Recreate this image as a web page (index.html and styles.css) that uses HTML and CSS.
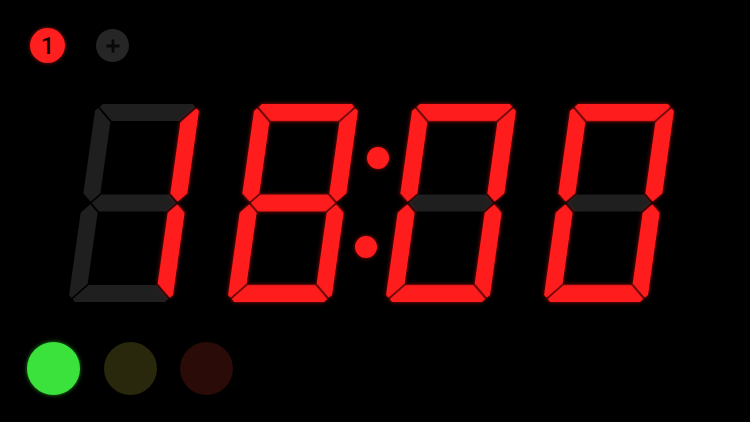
FILE: index.html
```html
<!DOCTYPE html>
<html>
<head>
<meta charset="utf-8">
<link rel="stylesheet" href="styles.css">
</head>
<body>
<div class="screen">
  <div class="topbar">
    <div class="badge">1</div>
    <div class="add">
      <svg width="16" height="16" viewBox="0 0 16 16"><path d="M8 1.5V14.5M1.5 8H14.5" class="plus"/></svg>
    </div>
  </div>
  <svg class="clock" viewBox="0 90 750 226" width="750" height="226">
    <defs>
      <polygon id="sa" points="-45,-99 45,-99 47.9,-96.1 33.8,-82 -33.8,-82 -47.9,-96.1"/>
      <polygon id="sb" points="35,-80.8 49.1,-94.9 52,-92 52,-9.7 43.5,-1.2 35,-9.7"/>
      <polygon id="sc" points="35,80.8 49.1,94.9 52,92 52,9.7 43.5,1.2 35,9.7"/>
      <polygon id="sd" points="-45,99 45,99 47.9,96.1 33.8,82 -33.8,82 -47.9,96.1"/>
      <polygon id="se" points="-35,80.8 -49.1,94.9 -52,92 -52,9.7 -43.5,1.2 -35,9.7"/>
      <polygon id="sf" points="-35,-80.8 -49.1,-94.9 -52,-92 -52,-9.7 -43.5,-1.2 -35,-9.7"/>
      <polygon id="sg" points="-42.3,0 -33.8,-8.5 33.8,-8.5 42.3,0 33.8,8.5 -33.8,8.5"/>
    </defs>
    <!-- digit 1 -->
    <g transform="translate(134 203) skewX(-8)">
      <use href="#sa" class="off"/><use href="#sd" class="off"/><use href="#se" class="off"/><use href="#sf" class="off"/><use href="#sg" class="off"/>
      <use href="#sb" class="on"/><use href="#sc" class="on"/>
    </g>
    <!-- digit 2 -->
    <g transform="translate(293 203) skewX(-8)">
      <use href="#sa" class="on"/><use href="#sb" class="on"/><use href="#sc" class="on"/><use href="#sd" class="on"/><use href="#se" class="on"/><use href="#sf" class="on"/><use href="#sg" class="on"/>
    </g>
    <!-- colon -->
    <circle cx="378" cy="158" r="11" class="on"/>
    <circle cx="366" cy="247" r="11" class="on"/>
    <!-- digit 3 -->
    <g transform="translate(451 203) skewX(-8)">
      <use href="#sg" class="off"/>
      <use href="#sa" class="on"/><use href="#sb" class="on"/><use href="#sc" class="on"/><use href="#sd" class="on"/><use href="#se" class="on"/><use href="#sf" class="on"/>
    </g>
    <!-- digit 4 -->
    <g transform="translate(609 203) skewX(-8)">
      <use href="#sg" class="off"/>
      <use href="#sa" class="on"/><use href="#sb" class="on"/><use href="#sc" class="on"/><use href="#sd" class="on"/><use href="#se" class="on"/><use href="#sf" class="on"/>
    </g>
  </svg>
  <div class="lights">
    <div class="light green"></div>
    <div class="light olive"></div>
    <div class="light maroon"></div>
  </div>
</div>
</body>
</html>
```
FILE: styles.css
```css
html, body {
  margin: 0;
  padding: 0;
  background: #000;
}
.screen {
  width: 750px;
  height: 422px;
  overflow: hidden;
  background: #000;
  font-family: Roboto, "Liberation Sans", sans-serif;
}
.topbar {
  display: flex;
  align-items: flex-start;
  gap: 31px;
  height: 90px;
  box-sizing: border-box;
  padding: 28px 0 0 30px;
}
.badge {
  width: 35px;
  height: 35px;
  border-radius: 50%;
  background: #ff1f1f;
  color: #100202;
  font-size: 24px;
  font-weight: 500;
  display: flex;
  align-items: center;
  justify-content: center;
  box-shadow: 0 0 4px rgba(255, 30, 30, 0.55);
}
.add {
  width: 33px;
  height: 33px;
  margin-top: 1px;
  border-radius: 50%;
  background: #262626;
  display: flex;
  align-items: center;
  justify-content: center;
}
.add svg {
  display: block;
}
.plus {
  stroke: #080808;
  stroke-width: 2.8;
  fill: none;
}
.clock {
  display: block;
}
.on {
  fill: #ff1c1c;
  filter: drop-shadow(0 0 2px rgba(255, 20, 20, 0.6));
}
.off {
  fill: #1f1f1f;
}
.lights {
  display: flex;
  gap: 23.5px;
  padding-left: 27px;
  margin-top: 26px;
}
.light {
  width: 53px;
  height: 53px;
  border-radius: 50%;
}
.green {
  background: #3be23b;
  box-shadow: 0 0 4px rgba(60, 230, 60, 0.6);
}
.olive {
  background: #2a280c;
}
.maroon {
  background: #2a0b08;
}
```
